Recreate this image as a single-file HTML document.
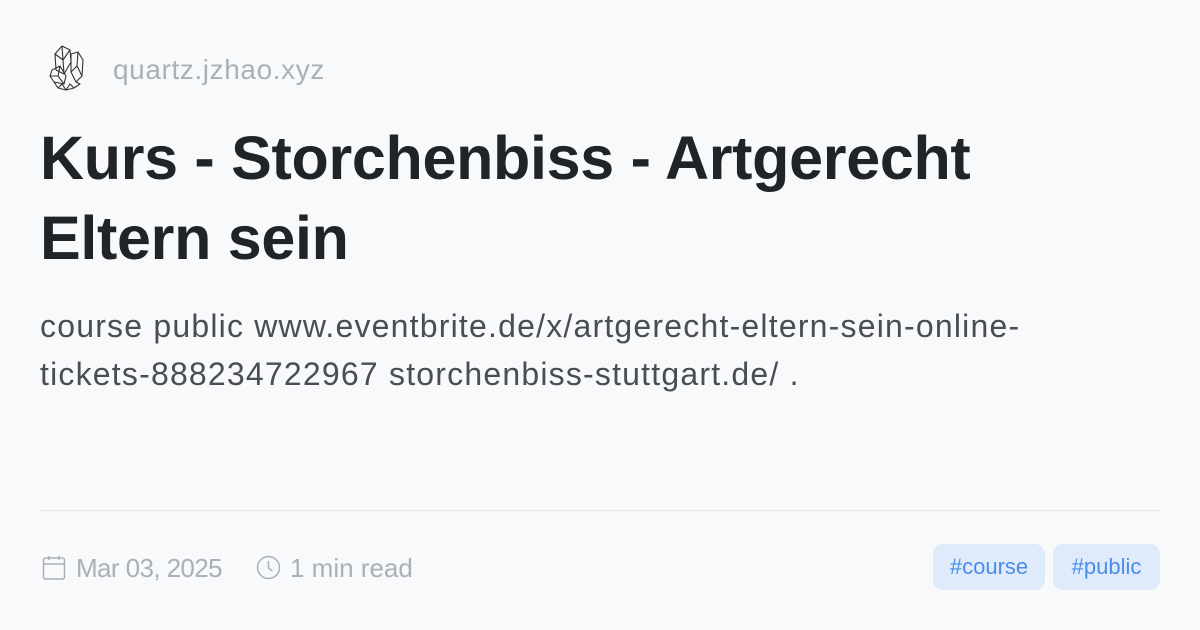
<!DOCTYPE html>
<html><head><meta charset="utf-8"><style>
html,body{margin:0;padding:0;width:1200px;height:630px;background:#f8f9fb;overflow:hidden;font-family:"Liberation Sans",sans-serif;}
.abs{position:absolute;white-space:nowrap}
</style></head><body>
<svg class="abs" style="left:46px;top:42px" width="42" height="52" viewBox="0 0 42 52" fill="none" stroke="#333" stroke-width="1.1" stroke-linejoin="round">
<path d="M16 4 L24 8 L25 20 L18 32 L10 28 L9 12 Z"/>
<path d="M16 4 L17 18 L18 32 M9 12 L17 18 L24 8"/>
<path d="M25 12 L32 10 L37 18 L36 34 L30 40 L25 30 Z M32 10 L31 24 L36 34 M31 24 L25 30"/>
<path d="M6 28 L14 24 L20 34 L18 42 L8 40 L4 34 Z M14 24 L12 34 L18 42 M12 34 L4 34"/>
<path d="M8 40 L12 46 L20 48 L28 46 L34 42 L30 40 M12 46 L16 42 L20 48 L24 42 L28 46"/>
</svg>
<div class="abs" style="left:113px;top:54px;font-size:28px;color:#aab0b6;letter-spacing:0.6px">quartz.jzhao.xyz</div>
<div class="abs" style="left:40px;top:118px;font-size:61px;font-weight:bold;color:#212427;line-height:80px;letter-spacing:-0.3px">Kurs - Storchenbiss - Artgerecht<br>Eltern sein</div>
<div class="abs" style="left:40px;top:302px;font-size:32px;color:#4a4e53;line-height:48px;letter-spacing:1.2px">course public www.eventbrite.de/x/artgerecht-eltern-sein-online-<br>tickets-888234722967 storchenbiss-stuttgart.de/ .</div>
<div class="abs" style="left:40px;top:510px;width:1120px;height:1px;background:#e4e6e9"></div>
<svg class="abs" style="left:42px;top:555px" width="24" height="26" viewBox="0 0 24 26" fill="none" stroke="#aab0b6" stroke-width="1.5"><rect x="1.5" y="3" width="21" height="21" rx="2"/><path d="M1.5 9h21M7 1v4M17 1v4"/></svg>
<div class="abs" style="left:76px;top:553px;font-size:26px;color:#aab0b6;letter-spacing:-0.6px">Mar 03, 2025</div>
<svg class="abs" style="left:256px;top:555px" width="25" height="25" viewBox="0 0 25 25" fill="none" stroke="#aab0b6" stroke-width="1.5"><circle cx="12.5" cy="12.5" r="11"/><path d="M12.5 6v7l4 3"/></svg>
<div class="abs" style="left:290px;top:553px;font-size:26px;color:#aab0b6">1 min read</div>
<div class="abs" style="left:933px;top:544px;width:112px;height:46px;border-radius:10px;background:#dfeafb;color:#4a8de8;font-size:22px;line-height:46px;text-align:center">#course</div>
<div class="abs" style="left:1053px;top:544px;width:107px;height:46px;border-radius:10px;background:#dfeafb;color:#4a8de8;font-size:22px;line-height:46px;text-align:center">#public</div>
</body></html>
